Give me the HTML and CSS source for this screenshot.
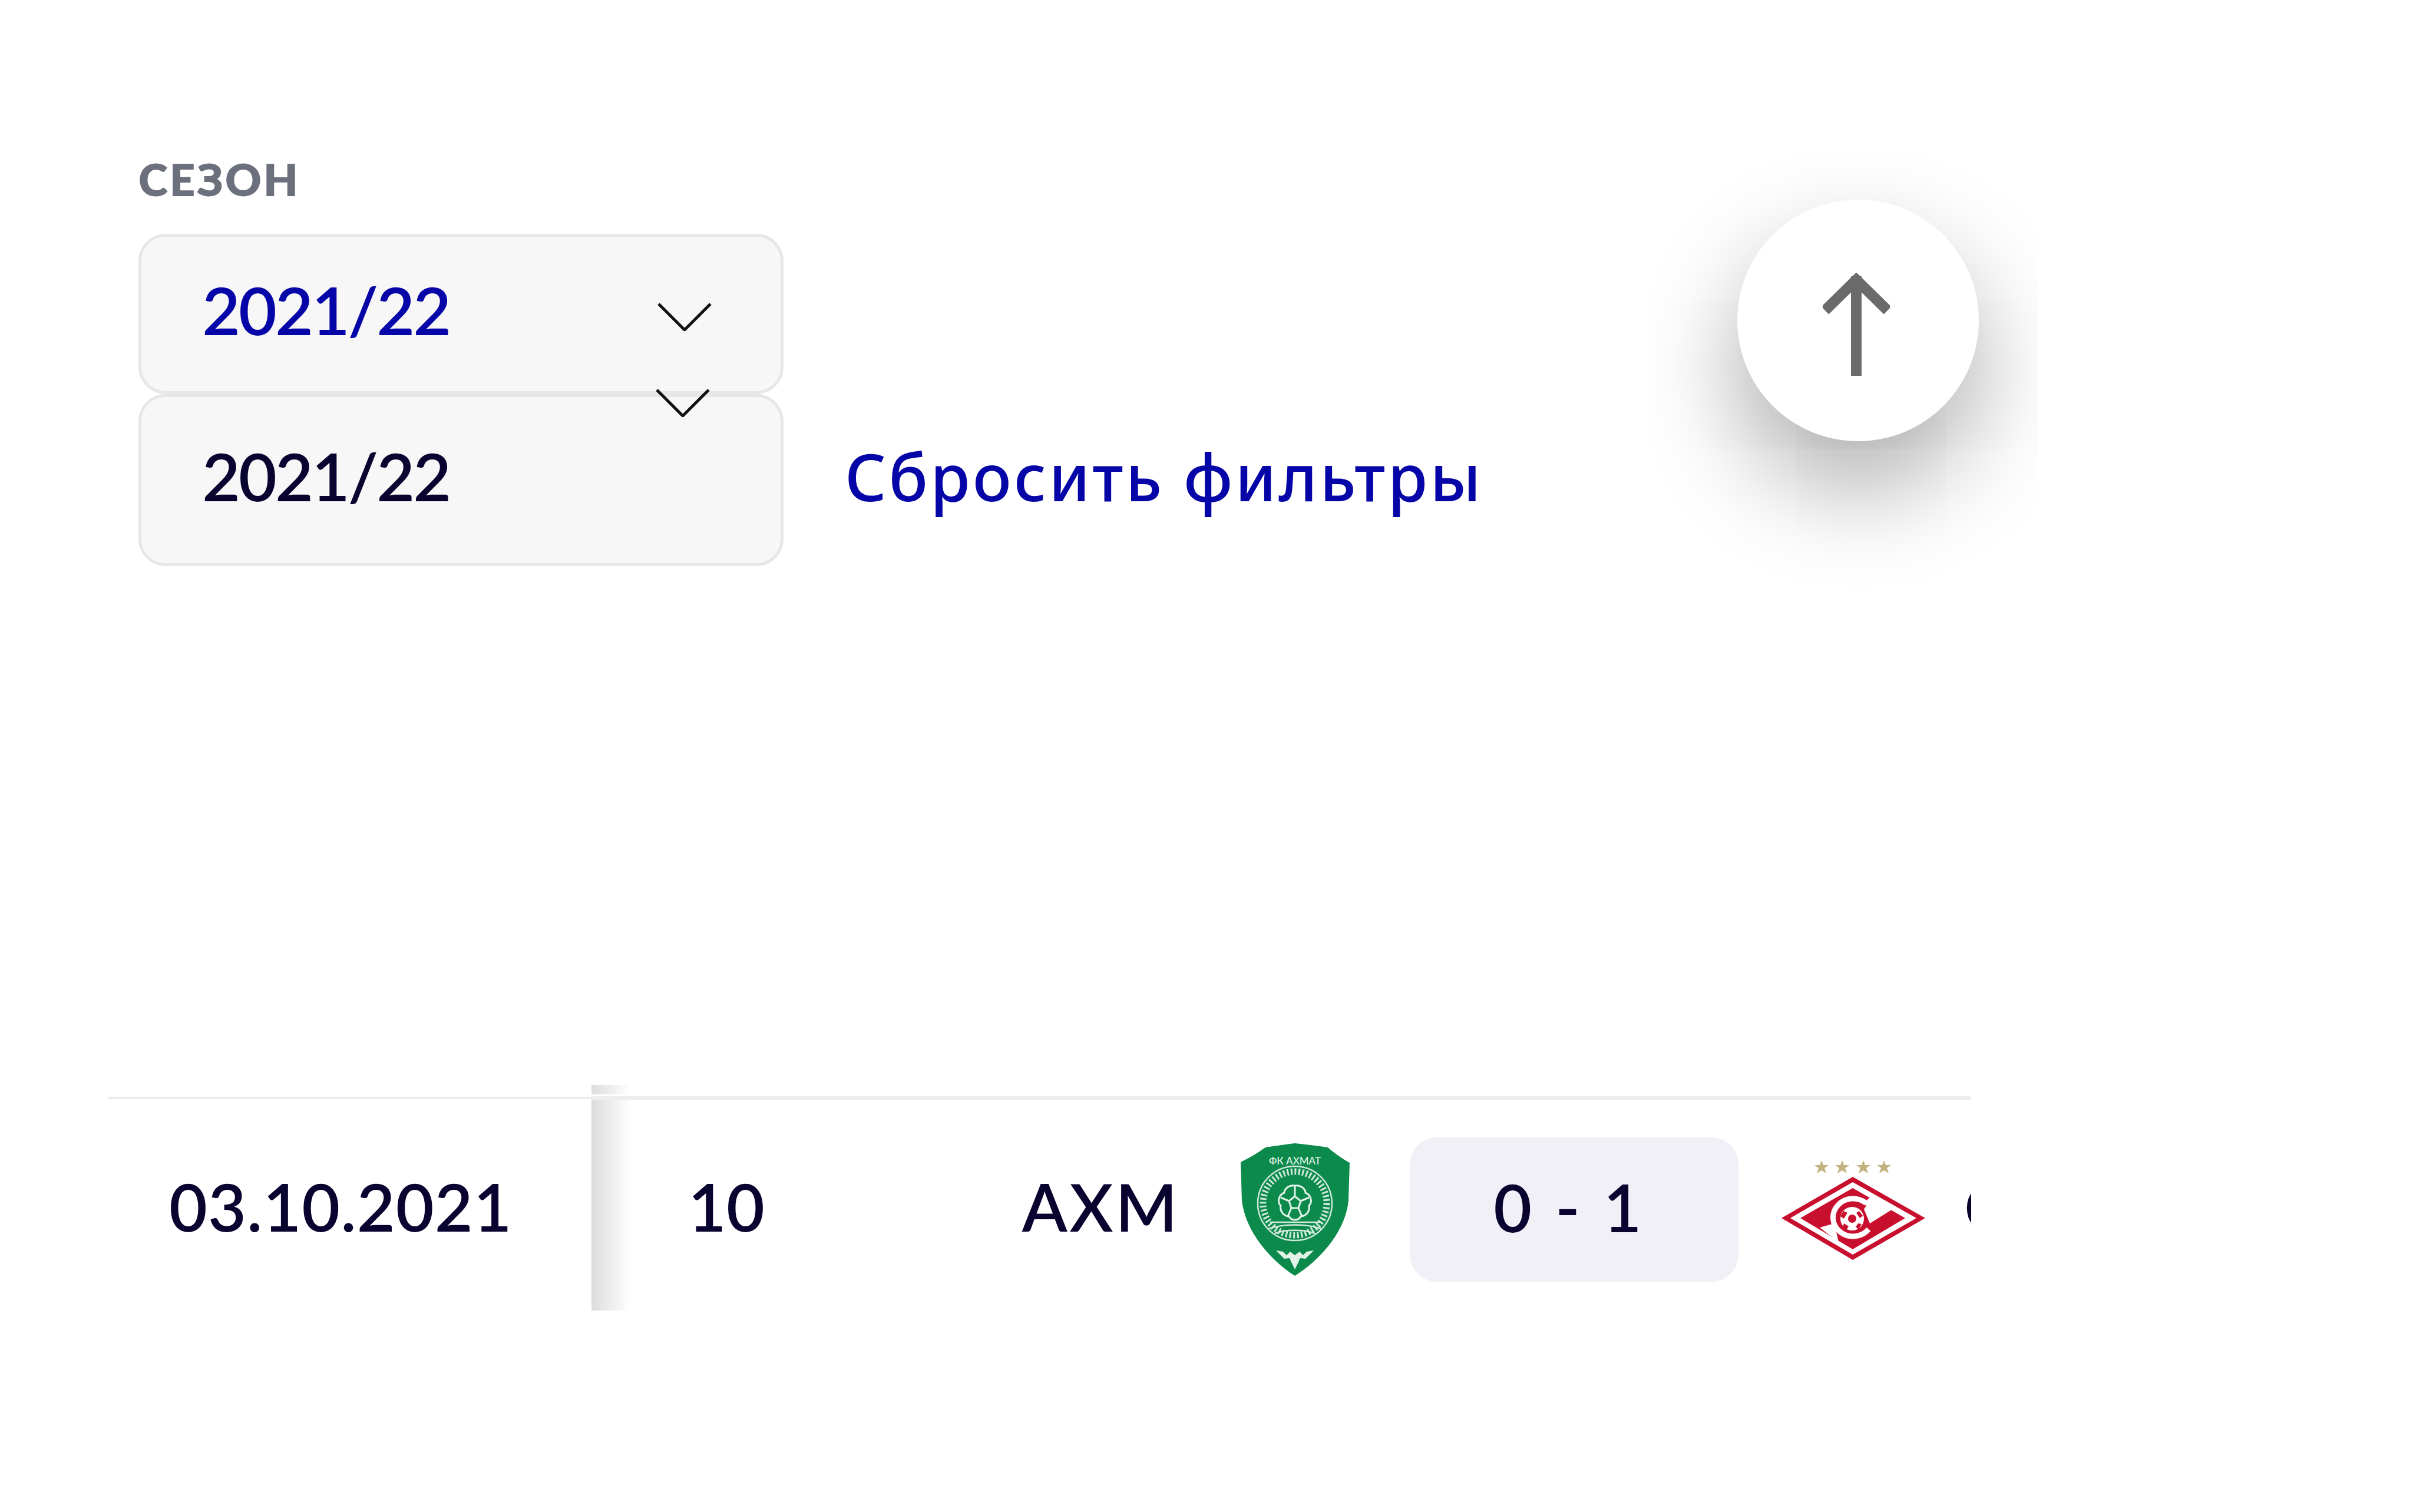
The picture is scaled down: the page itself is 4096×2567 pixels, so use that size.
FILE: index.html
```html
<!DOCTYPE html>
<html lang="ru">
<head>
  <meta charset="UTF-8" />
  <title>Матчи</title>
  <link rel="stylesheet" href="styles.css">
</head>
<body>
  <div class="page">
    <div class="filters">
      <div class="filter-label">СЕЗОН</div>
      <div class="select select-open">
        <span class="select-value">2021/22</span>
        <svg class="chevron" viewBox="0 0 92 48"><path d="M2 2 L46 46 L90 2" /></svg>
      </div>
      <div class="filter-row">
        <div class="select select-native">
          <span class="select-value">2021/22</span>
          <svg class="chevron chevron-over" viewBox="0 0 92 48"><path d="M2 2 L46 46 L90 2" /></svg>
        </div>
        <a class="reset-link" href="#">Сбросить фильтры</a>
      </div>
    </div>

    <div class="up-clip">
      <button class="up-button">
        <svg viewBox="0 0 114 175"><path d="M57 175 V6 M4 64 L57 12 L110 64" /></svg>
      </button>
    </div>

    <div class="table">
      <div class="row">
        <div class="cell-text cell-date">03.10.2021</div>
        <div class="cell-text cell-round">10</div>
        <div class="cell-text cell-home">АХМ</div>
        <svg class="logo-akhmat" viewBox="0 0 185 225">
          <path fill="#0b8a4b" d="M0 32 C16 24 30 16 42 7 C60 4 76 2 92 0 C110 2 130 4 148 7 C158 16 172 26 185 33 L183 97 C178 150 135 198 92 225 C50 198 8 150 2 97 Z" />
          <text class="akhmat-name" x="92" y="36" text-anchor="middle">ФК АХМАТ</text>
          <circle cx="92" cy="102" r="63" fill="none" stroke="#cfe9da" stroke-width="2.5" />
          <circle cx="92" cy="102" r="54" fill="none" stroke="#cfe9da" stroke-width="11" stroke-dasharray="3 3.5" />
          <path fill="none" stroke="#e2f3e9" stroke-width="3" d="M92 72 C102 70 110 78 110 84 C120 88 122 100 116 106 C118 116 110 124 102 124 C98 132 86 132 82 124 C74 124 66 116 68 106 C62 100 64 88 74 84 C74 78 82 70 92 72 Z" />
          <path fill="none" stroke="#e2f3e9" stroke-width="3" d="M92 90 L102 98 L98 110 H86 L82 98 Z M92 90 V72 M102 98 L116 92 M98 110 L104 124 M86 110 L80 124 M82 98 L68 92" />
          <path fill="none" stroke="#cfe9da" stroke-width="2.5" d="M50 134 H134 M46 146 C70 136 114 136 138 146 M58 153 C76 146 108 146 126 153" />
          <path fill="#e2f3e9" d="M60 182 L72 184 L78 190 L84 184 L92 190 L100 184 L106 190 L112 184 L124 182 L110 196 L101 195 L97 204 L92 214 L87 204 L83 195 L74 196 Z" />
        </svg>
        <div class="score">0 - 1</div>
        <svg class="logo-spartak" viewBox="0 0 244 170">
          <g fill="#c2b27f">
            <path d="M68 1 L71 9 L80 9 L73 14 L76 23 L68 18 L60 23 L63 14 L56 9 L65 9 Z" />
            <path d="M103 1 L106 9 L115 9 L108 14 L111 23 L103 18 L95 23 L98 14 L91 9 L100 9 Z" />
            <path d="M139 1 L142 9 L151 9 L144 14 L147 23 L139 18 L131 23 L134 14 L127 9 L136 9 Z" />
            <path d="M174 1 L177 9 L186 9 L179 14 L182 23 L174 18 L166 23 L169 14 L162 9 L171 9 Z" />
          </g>
          <path fill="#c8102e" d="M121 29 L244 99 L121 170 L0 99 Z" />
          <path fill="#fff" d="M121 38 L229 99 L121 161 L15 99 Z" />
          <path fill="#c8102e" d="M121 48 L210 99 L121 152 L32 99 Z" />
          <path fill="#fff" d="M154 62 L190 83 L150 108 L140 84 Z M65 115 L90 108 L97 140 Z" />
          <circle cx="120" cy="100" r="24" fill="#c8102e" />
          <circle cx="120" cy="100" r="20" fill="#fff" />
          <circle cx="120" cy="100" r="7" fill="#c8102e" />
          <path fill="#c8102e" d="M105 87 L112 90 L106 100 L100 96 Z M132 87 L138 95 L133 99 L127 90 Z M106 108 L114 113 L110 119 L104 114 Z M130 108 L136 109 L131 118 L126 114 Z" />
          <path fill="none" stroke="#fff" stroke-width="9" d="M144 74 A34 32 0 1 0 148 118" />
          <path fill="#fff" d="M153 62 L151 82 L138 74 Z" />
        </svg>
        <div class="cell-text cell-away">СПА</div>
      </div>
      <div class="sticky-shadow"></div>
      <div class="row-line"></div>
    </div>
  </div>
</body>
</html>
```

FILE: styles.css
```css
html, body {
  margin: 0;
  padding: 0;
  background: #fff;
}
body {
  font-family: Lato, "Noto Sans", sans-serif;
  color: #08042f;
}
.page {
  position: relative;
  width: 4096px;
  height: 2567px;
  overflow: hidden;
}
.filters {
  padding: 264px 0 0 235px;
}
.filter-label {
  color: #6c707d;
  font-size: 76px;
  line-height: 80px;
  font-weight: 800;
  letter-spacing: 3px;
  margin-bottom: 53px;
}
.select {
  box-sizing: border-box;
  width: 1095px;
  display: flex;
  align-items: center;
  justify-content: space-between;
  padding: 0 117px 0 103px;
  background: #f7f7f7;
  border: 5px solid #e7e7e7;
  border-radius: 46px;
  font-size: 112px;
  font-weight: 600;
  position: relative;
}
.select-value {
  letter-spacing: -3px;
  padding-bottom: 16px;
}
.select-open {
  height: 272px;
  color: #0606a8;
}
.select-open .chevron {
  margin-top: 10px;
}
.select-native {
  height: 292px;
}
.chevron {
  width: 92px;
  height: 48px;
  fill: none;
  stroke: #111;
  stroke-width: 5;
}
.chevron-over {
  position: absolute;
  top: -14px;
  right: 120px;
}
.filter-row {
  display: flex;
  align-items: center;
  gap: 104px;
}
.reset-link {
  color: #0606a8;
  text-decoration: none;
  font-family: "Noto Sans", sans-serif;
  font-size: 110px;
  font-weight: 500;
  letter-spacing: 4px;
  line-height: 130px;
  padding-bottom: 14px;
}
.up-clip {
  position: absolute;
  left: 2700px;
  top: 240px;
  width: 759px;
  height: 840px;
  overflow: hidden;
}
.up-button {
  position: absolute;
  left: 249px;
  top: 99px;
  width: 410px;
  height: 410px;
  padding: 0;
  border: none;
  border-radius: 50%;
  background: #fff;
  box-shadow: 0 80px 170px rgba(0, 0, 0, 0.33);
  display: flex;
  align-items: center;
  justify-content: center;
}
.up-button svg {
  width: 114px;
  height: 175px;
  fill: none;
  stroke: #6b6b6b;
  stroke-width: 18;
  margin-top: 12px;
  margin-left: -6px;
}
.table {
  position: absolute;
  left: 183px;
  top: 1842px;
  width: 3163px;
  height: 383px;
  overflow: hidden;
}
.row {
  box-sizing: border-box;
  margin-top: 20px;
  height: 363px;
  padding-top: 16px;
  border-top: 4px solid #ececec;
  display: flex;
  align-items: center;
  font-size: 112px;
  font-weight: 600;
  white-space: nowrap;
}
.cell-text {
  box-sizing: border-box;
  flex: none;
  padding-bottom: 12px;
}
.cell-date {
  width: 821px;
  padding-left: 104px;
  letter-spacing: 1px;
}
.cell-round {
  width: 731px;
  padding-left: 164px;
}
.cell-home {
  width: 371px;
  letter-spacing: 4px;
}
.logo-akhmat {
  width: 185px;
  height: 225px;
  flex: none;
  margin-right: 102px;
}
.akhmat-name {
  font-size: 17px;
  fill: #e2f3e9;
  font-weight: 500;
}
.score {
  box-sizing: border-box;
  width: 558px;
  height: 245px;
  flex: none;
  display: flex;
  align-items: center;
  justify-content: center;
  padding: 0 22px 10px 0;
  word-spacing: 12px;
  background: #f0f0f6;
  border-radius: 46px;
  margin-right: 73px;
}
.logo-spartak {
  width: 244px;
  height: 170px;
  flex: none;
  margin-right: 66px;
}
.sticky-shadow {
  position: absolute;
  left: 821px;
  top: 0;
  width: 66px;
  height: 383px;
  background: linear-gradient(to right, #dcdcdc, rgba(255, 255, 255, 0));
}
.row-line {
  position: absolute;
  left: 821px;
  right: 0;
  top: 16px;
  height: 7px;
  border-top: 3px solid #fff;
  background: #eee;
}
```
